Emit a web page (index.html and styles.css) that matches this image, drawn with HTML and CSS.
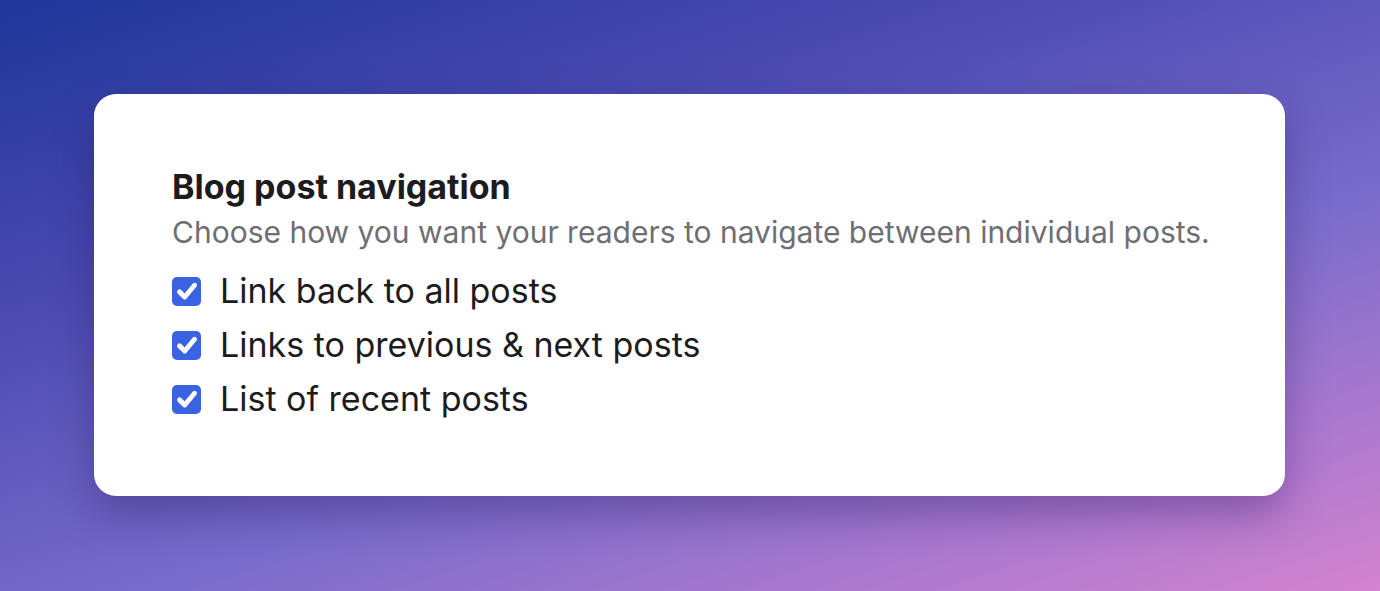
FILE: index.html
```html
<!DOCTYPE html>
<html lang="en">
<head>
<meta charset="utf-8">
<title>Blog post navigation</title>
<link rel="stylesheet" href="styles.css">
</head>
<body>
  <main class="stage">
    <section class="card">
      <h2 class="card-title">Blog post navigation</h2>
      <p class="card-desc">Choose how you want your readers to navigate between individual posts.</p>
      <ul class="options">
        <li class="option">
          <span class="check"><svg viewBox="0 0 16 16" aria-hidden="true"><path d="M3.7 8.5 6.7 11.4 12.3 4.7"/></svg></span>
          <span class="option-label">Link back to all posts</span>
        </li>
        <li class="option">
          <span class="check"><svg viewBox="0 0 16 16" aria-hidden="true"><path d="M3.7 8.5 6.7 11.4 12.3 4.7"/></svg></span>
          <span class="option-label">Links to previous &amp; next posts</span>
        </li>
        <li class="option">
          <span class="check"><svg viewBox="0 0 16 16" aria-hidden="true"><path d="M3.7 8.5 6.7 11.4 12.3 4.7"/></svg></span>
          <span class="option-label">List of recent posts</span>
        </li>
      </ul>
    </section>
  </main>
</body>
</html>
```

FILE: styles.css
```css
* {
  box-sizing: border-box;
}

html, body {
  margin: 0;
  height: 100%;
}

body {
  font-family: Inter, "Noto Sans", "Liberation Sans", sans-serif;
  background:
    linear-gradient(162deg, #1f369a 0%, #4a4ab0 30%, #7a6ccc 62%, #d483d0 100%);
  overflow: hidden;
}

.stage {
  height: 100%;
  display: flex;
  align-items: center;
  justify-content: center;
}

.card {
  width: 1191px;
  height: 402px;
  margin: 0 1px 1px 0;
  background: #ffffff;
  border-radius: 22px;
  padding: 73px 60px 0 78px;
  box-shadow: 0 18px 40px rgba(40, 20, 90, 0.35);
}

.card-title {
  margin: 0;
  font-size: 34px;
  line-height: 40px;
  font-weight: 700;
  color: #1c1c1e;
}

.card-desc {
  margin: 5px 0 0;
  font-size: 30px;
  line-height: 40px;
  color: #6e6e73;
  white-space: nowrap;
}

.options {
  list-style: none;
  margin: 19px 0 0;
  padding: 0;
  display: flex;
  flex-direction: column;
  gap: 14px;
}

.option {
  display: flex;
  align-items: center;
  gap: 19px;
  height: 40px;
}

.check {
  width: 29px;
  height: 29px;
  border-radius: 5px;
  background: #3a63e2;
  display: flex;
  align-items: center;
  justify-content: center;
  flex: none;
}

.check svg {
  width: 28px;
  height: 28px;
  fill: none;
  stroke: #ffffff;
  stroke-width: 2.8;
  stroke-linecap: round;
  stroke-linejoin: round;
}

.option-label {
  font-size: 34px;
  line-height: 40px;
  color: #1c1c1e;
}
```
